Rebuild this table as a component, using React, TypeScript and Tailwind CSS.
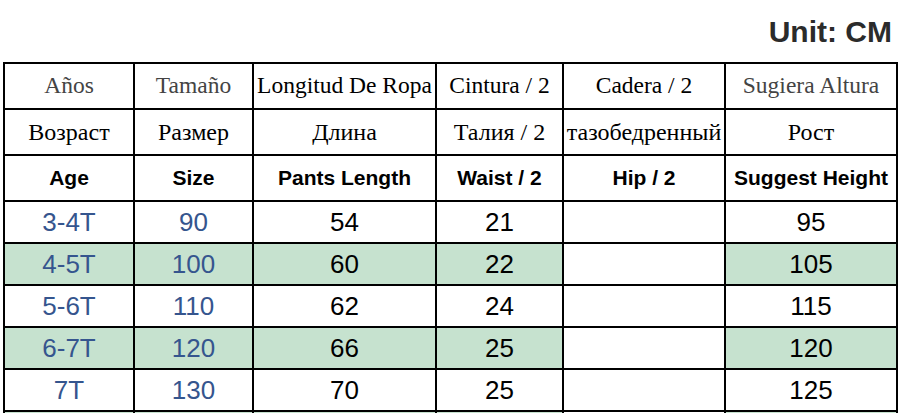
import React from 'react';

const serif = { fontFamily: '"Liberation Serif", "DejaVu Serif", serif' };

const spanish = ['Años', 'Tamaño', 'Longitud De Ropa', 'Cintura / 2', 'Cadera / 2', 'Sugiera Altura'];
const russian = ['Возраст', 'Размер', 'Длина', 'Талия / 2', 'тазобедренный', 'Рост'];
const english = ['Age', 'Size', 'Pants Length', 'Waist / 2', 'Hip / 2', 'Suggest Height'];

const rows = [
  { age: '3-4T', size: '90', length: '54', waist: '21', hip: '', height: '95' },
  { age: '4-5T', size: '100', length: '60', waist: '22', hip: '', height: '105' },
  { age: '5-6T', size: '110', length: '62', waist: '24', hip: '', height: '115' },
  { age: '6-7T', size: '120', length: '66', waist: '25', hip: '', height: '120' },
  { age: '7T', size: '130', length: '70', waist: '25', hip: '', height: '125' },
];

const widths = [130, 119, 183, 127, 162, 172];

const App: React.FC = () => {
  return (
    <div className="w-[900px] h-[413px] overflow-hidden bg-white" style={{ fontFamily: '"Liberation Sans", Arial, sans-serif' }}>
      <div className="h-[62px] pt-[17px] pr-[8px] text-right text-[30px] leading-none font-bold text-[#2b2b2b]">
        Unit: CM
      </div>

      <table className="ml-[3px] table-fixed border-collapse border-2 border-black" style={{ width: 894 }}>
        <colgroup>
          {widths.map((w, i) => (
            <col key={i} style={{ width: w }} />
          ))}
        </colgroup>
        <tbody>
          <tr>
            {spanish.map((t, i) => (
              <td
                key={t}
                className={`h-[46px] p-0 border-2 border-black text-center text-[23.5px] whitespace-nowrap ${
                  i === 0 || i === 1 || i === 5 ? 'text-[#444]' : 'text-black'
                }`}
                style={serif}
              >
                {t}
              </td>
            ))}
          </tr>
          <tr>
            {russian.map((t) => (
              <td key={t} className="h-[46px] p-0 border-2 border-black text-center text-[24px] text-black whitespace-nowrap" style={serif}>
                {t}
              </td>
            ))}
          </tr>
          <tr>
            {english.map((t) => (
              <td key={t} className="h-[46px] p-0 border-2 border-black text-center text-[21px] font-bold text-black whitespace-nowrap">
                {t}
              </td>
            ))}
          </tr>
          {rows.map((r, idx) => {
            const bg = idx % 2 === 1 ? 'bg-[#c6e2cf]' : 'bg-white';
            return (
              <tr key={r.age} className={bg}>
                <td className="h-[42px] p-0 border-2 border-black text-center text-[26px] text-[#35558e]">{r.age}</td>
                <td className="h-[42px] p-0 border-2 border-black text-center text-[26px] text-[#35558e]">{r.size}</td>
                <td className="h-[42px] p-0 border-2 border-black text-center text-[26px] text-black">{r.length}</td>
                <td className="h-[42px] p-0 border-2 border-black text-center text-[26px] text-black">{r.waist}</td>
                <td className="h-[42px] p-0 border-2 border-black text-center text-[26px] text-black bg-white">{r.hip}</td>
                <td className="h-[42px] p-0 border-2 border-black text-center text-[26px] text-black">{r.height}</td>
              </tr>
            );
          })}
          <tr className="bg-[#c6e2cf]">
            {widths.map((w, i) => (
              <td key={i} className={`h-[42px] p-0 border-2 border-black ${i === 4 ? 'bg-white' : ''}`} />
            ))}
          </tr>
        </tbody>
      </table>
    </div>
  );
};

export default App;
